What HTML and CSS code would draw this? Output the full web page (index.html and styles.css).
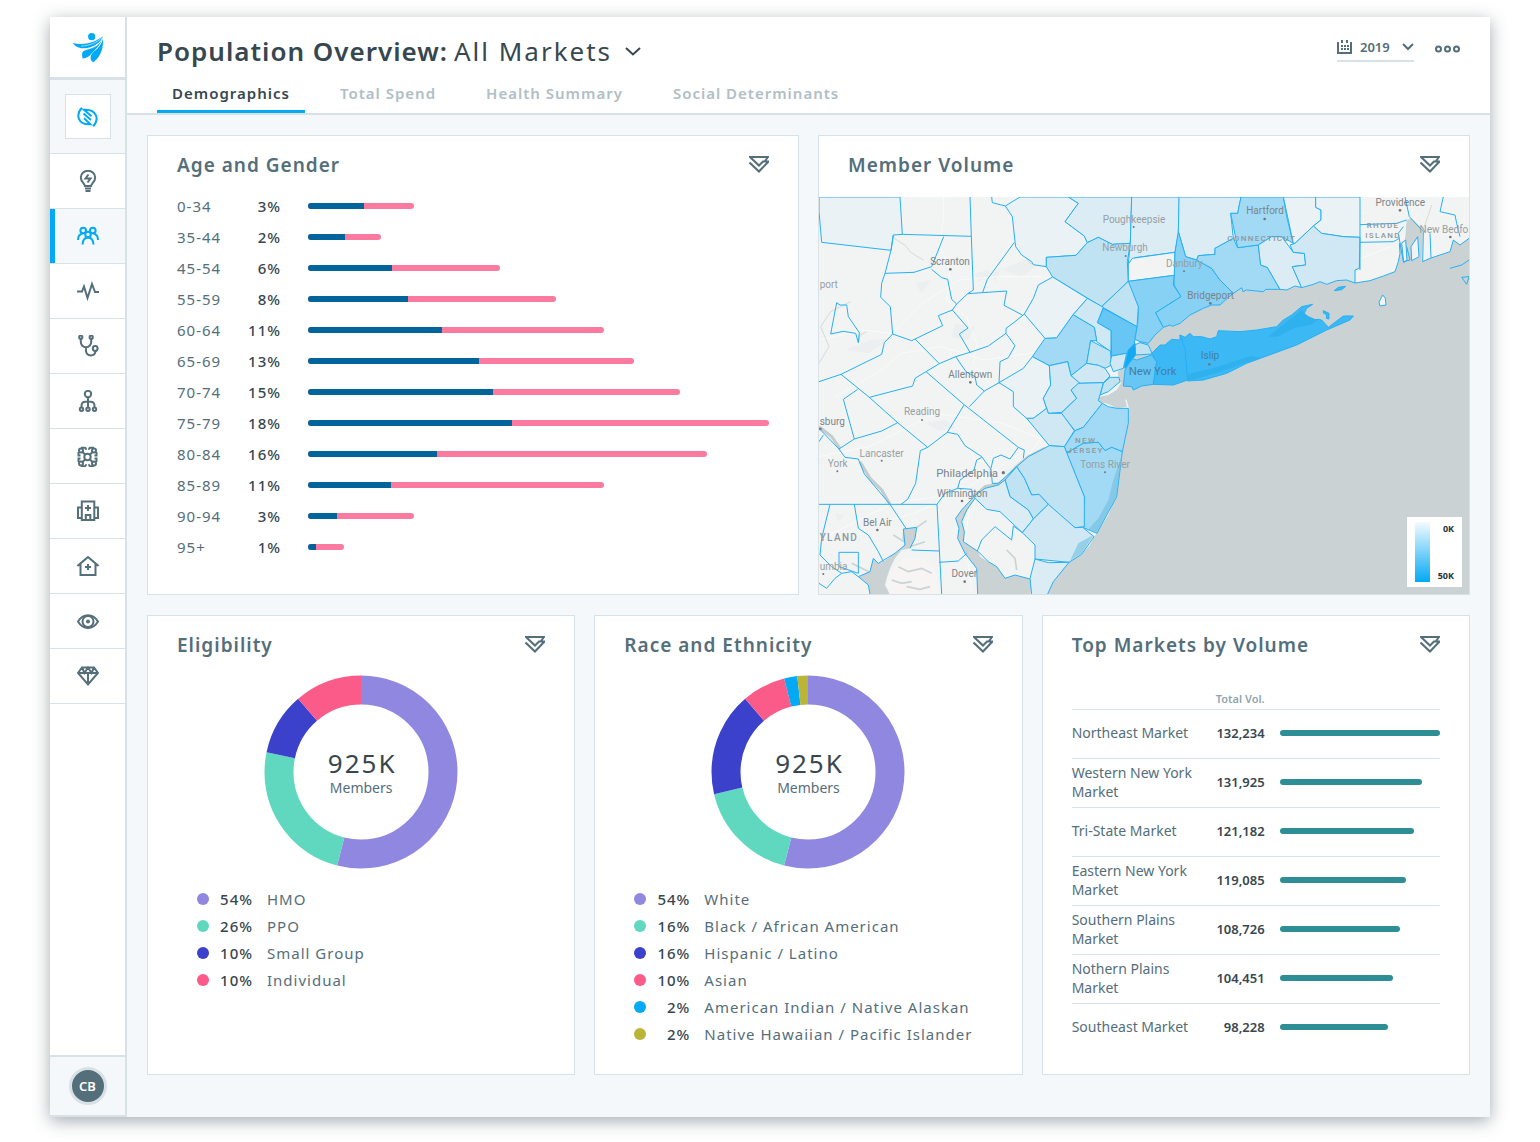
FILE: index.html
```html
<!DOCTYPE html>
<html lang="en">
<head>
  <meta charset="UTF-8">
  <meta name="viewport" content="width=device-width, initial-scale=1.0">
  <title>Population Overview</title>
  <link rel="stylesheet" href="styles.css">
</head>
<body>
  <!-- shared icons -->
  <svg class="sprite" aria-hidden="true">
    <symbol id="i-filter" viewBox="0 0 20 17"><path d="M16 5l3-4H1l9 8.500 4-4h5.500L10 15.500.5 6.500"/></symbol>
    <symbol id="i-chevron" viewBox="0 0 16 9"><path d="M1 1l7 6.500L15 1"/></symbol>
  </svg>

  <div class="app">
    <nav class="sidebar" aria-label="Main">
      <a class="brand" href="#" aria-label="Home">
        <svg width="30" height="30" viewBox="0 0 30 30">
          <circle cx="18.700" cy="3.700" r="3.600"/>
          <path d="M0 10c10 2.300 21 .5 30-7-1 3-2.500 5-4.500 6.800C20 14 14 15.800 8.500 15.200 4.500 14.500 1.500 12.800 0 10z"/>
          <path d="M29.500 5c-1.500 4.500-5 8-10 10-3 1.200-7 1.800-9 3-2 1.500-1.500 4.500-.8 7.500 4-.3 6.500-2 9-5C22 16.500 27.500 12.500 29.500 5z"/>
          <path d="M29.900 6c.8 9.500-2.500 18-9.600 23.300-3-1.500-3.500-4.800-1.700-8C21.500 17 27.500 15 29.900 6z"/>
          <path class="stripe" d="M29.500 4C24 9.500 18 12.300 8 13.200"/>
        </svg>
      </a>
      <div class="org">
        <a class="org-box" href="#" aria-label="Organization">
          <svg class="icon" width="21" height="20" viewBox="0 0 21 20"><path d="M5 .8C-1.500 7.500.5 18 13.500 17.300L7 11.200M16.200 19.300C22.500 12.500 20 2 7 2.800l7.500 6.500M6.500 6.500l7.500 6.500"/></svg>
        </a>
      </div>
      <a class="nav-item" href="#" aria-label="Insights">
        <svg class="icon" width="22" height="22" viewBox="0 0 22 22"><path d="M8 16c-.2-2.500-4.200-4-4.200-8.500a7.200 6.700 0 0 1 14.400 0C18.200 12 14.200 13.500 14 16zM8 18.500h6M8.500 21h5"/><path d="M11.500 4.500L8.500 8.500h5l-3 4" /></svg>
      </a>
      <a class="nav-item active" href="#" aria-label="Population">
        <svg class="icon" width="22" height="22" viewBox="0 0 22 22"><circle cx="6.200" cy="5.500" r="2.800"/><circle cx="15.800" cy="5.500" r="2.800"/><circle cx="11" cy="9.500" r="2.800"/><path d="M1 15c0-3.500 1.800-5.800 4.500-6.500M21 15c0-3.500-1.800-5.800-4.500-6.500M5.500 19.500c.3-4.500 2.500-7 5.500-7s5.200 2.500 5.500 7"/></svg>
      </a>
      <a class="nav-item" href="#" aria-label="Activity">
        <svg class="icon" width="22" height="22" viewBox="0 0 22 22"><path d="M0 11.500h5l2-5 3.500 11.500L15 4l3 8h4"/></svg>
      </a>
      <a class="nav-item" href="#" aria-label="Care">
        <svg class="icon" width="22" height="22" viewBox="0 0 22 22"><circle cx="3.800" cy="2.200" r="1.600"/><circle cx="14.200" cy="2.200" r="1.600"/><circle cx="18.200" cy="13.500" r="2.400"/><path d="M3.800 4v3a5.200 5.200 0 0 0 10.400 0V4M9 12.200v4a4.800 4.800 0 0 0 9.500.2V16"/></svg>
      </a>
      <a class="nav-item" href="#" aria-label="Structure">
        <svg class="icon" width="22" height="22" viewBox="0 0 22 22"><circle cx="11" cy="4" r="3.200"/><circle cx="4.500" cy="19.200" r="1.700"/><circle cx="11" cy="19.200" r="1.700"/><circle cx="17.500" cy="19.200" r="1.700"/><path d="M11 7.200v10.300M4.500 17.500v-1.500c0-2.800 1.500-4.200 4-4.200h5c2.500 0 4 1.400 4 4.200v1.500"/></svg>
      </a>
      <a class="nav-item" href="#" aria-label="Networks">
        <svg class="icon" width="22" height="22" viewBox="0 0 22 22"><circle cx="10.500" cy="12" r="3.200"/><circle cx="4" cy="5.500" r="2"/><circle cx="17" cy="5.500" r="2"/><circle cx="4" cy="18.500" r="2"/><circle cx="17" cy="18.500" r="2"/><path d="M5.500 7l3 3M15.500 7l-3 3M5.500 17l3-3M15.500 17l-3-3M4 2.800h3.500c1 0 1.500 1 1.500 2M17 2.800h-3.500c-1 0-1.500 1-1.500 2M4 21.200h3.500c1 0 1.500-1 1.500-2M17 21.200h-3.500c-1 0-1.500-1-1.500-2M1.500 7v3.500h2M1.500 17v-3.500h2M19.500 7v3.500h-2M19.500 17v-3.500h-2"/></svg>
      </a>
      <a class="nav-item" href="#" aria-label="Hospitals">
        <svg class="icon" width="22" height="22" viewBox="0 0 22 22"><path d="M4.800 1.500h12.500v18.500H4.800zM4.800 7.500H1v10.500h3.800M17.300 7.500H21v10.500h-3.700M8.800 20v-5h4.500v5M11 5v6M8 8h6"/></svg>
      </a>
      <a class="nav-item" href="#" aria-label="Home care">
        <svg class="icon" width="22" height="22" viewBox="0 0 22 22"><path d="M.5 11L11 2l10.500 9M3.500 9v11h15V9M11 9v6M8 12h6"/></svg>
      </a>
      <a class="nav-item" href="#" aria-label="Vision">
        <svg class="icon" width="22" height="22" viewBox="0 0 22 22"><path d="M1 11.500c5-8.500 15-8.500 20 0-5 8.500-15 8.500-20 0z"/><circle cx="11" cy="11.500" r="5.500"/><circle cx="11" cy="11.500" r="1"/></svg>
      </a>
      <a class="nav-item" href="#" aria-label="Value">
        <svg class="icon" width="22" height="22" viewBox="0 0 22 22"><path d="M5 2.500h12l4 5.500-10 11.500L1 8zM1 8h20M11 8v11M5 2.500L7.500 8 11 2.500 14.500 8 17 2.500"/></svg>
      </a>
      <div class="user"><a class="avatar" href="#">CB</a></div>
    </nav>

    <div class="main">
      <header class="header">
        <div class="title-row">
          <h1>
            <label for="market">Population Overview:</label>
            <span class="picker">
              <select id="market"><option>All Markets</option></select>
              <svg class="icon" width="16" height="9"><use href="#i-chevron"/></svg>
            </span>
          </h1>
          <div class="tools">
            <div class="picker year">
              <label for="year" aria-label="Year">
                <svg class="icon" width="15" height="14" viewBox="0 0 15 14"><path d="M1 2v11h13V2M5 0v3M10 0v3"/><path class="dots" d="M4 6h8M4 9h8"/></svg>
              </label>
              <select id="year"><option>2019</option></select>
              <svg class="icon" width="12" height="8" viewBox="0 0 12 8"><path d="M1 1l5 5 5-5"/></svg>
            </div>
            <button class="more" type="button" aria-label="More">
              <svg class="icon" width="25" height="8" viewBox="0 0 25 8"><circle cx="3.500" cy="4" r="2.500"/><circle cx="12.500" cy="4" r="2.500"/><circle cx="21.500" cy="4" r="2.500"/></svg>
            </button>
          </div>
        </div>
        <div class="tabs">
          <a class="tab current" href="#">Demographics</a>
          <a class="tab" href="#">Total Spend</a>
          <a class="tab" href="#">Health Summary</a>
          <a class="tab" href="#">Social Determinants</a>
        </div>
      </header>

      <main class="content">
        <div class="row two">
          <section class="card">
            <div class="card-head">
              <h2>Age and Gender</h2>
              <button type="button" aria-label="Filter"><svg class="icon" width="20" height="17"><use href="#i-filter"/></svg></button>
            </div>
            <table class="ages">
              <tr><th scope="row">0-34</th><td>3%</td><td class="bar-cell"><div class="bar split" style="width:22.900%"><i style="width:53%"></i></div></td></tr>
              <tr><th scope="row">35-44</th><td>2%</td><td class="bar-cell"><div class="bar split" style="width:15.800%"><i style="width:50.500%"></i></div></td></tr>
              <tr><th scope="row">45-54</th><td>6%</td><td class="bar-cell"><div class="bar split" style="width:41.600%"><i style="width:43.800%"></i></div></td></tr>
              <tr><th scope="row">55-59</th><td>8%</td><td class="bar-cell"><div class="bar split" style="width:53.800%"><i style="width:40.300%"></i></div></td></tr>
              <tr><th scope="row">60-64</th><td>11%</td><td class="bar-cell"><div class="bar split" style="width:64.200%"><i style="width:45.400%"></i></div></td></tr>
              <tr><th scope="row">65-69</th><td>13%</td><td class="bar-cell"><div class="bar split" style="width:70.700%"><i style="width:52.400%"></i></div></td></tr>
              <tr><th scope="row">70-74</th><td>15%</td><td class="bar-cell"><div class="bar split" style="width:80.800%"><i style="width:49.600%"></i></div></td></tr>
              <tr><th scope="row">75-79</th><td>18%</td><td class="bar-cell"><div class="bar split" style="width:100%"><i style="width:44.200%"></i></div></td></tr>
              <tr><th scope="row">80-84</th><td>16%</td><td class="bar-cell"><div class="bar split" style="width:86.600%"><i style="width:32.300%"></i></div></td></tr>
              <tr><th scope="row">85-89</th><td>11%</td><td class="bar-cell"><div class="bar split" style="width:64.200%"><i style="width:28%"></i></div></td></tr>
              <tr><th scope="row">90-94</th><td>3%</td><td class="bar-cell"><div class="bar split" style="width:22.900%"><i style="width:27.500%"></i></div></td></tr>
              <tr><th scope="row">95+</th><td>1%</td><td class="bar-cell"><div class="bar split" style="width:7.800%"><i style="width:22%"></i></div></td></tr>
            </table>
          </section>

          <section class="card map-card">
            <div class="card-head">
              <h2>Member Volume</h2>
              <button type="button" aria-label="Filter"><svg class="icon" width="20" height="17"><use href="#i-filter"/></svg></button>
            </div>
            <div class="map">
              <svg class="map-art" viewBox="12 21 1950 1191" preserveAspectRatio="xMidYMid slice">
                <!-- roads and hills -->
                <g class="hills">
                  <path d="M50 90l60-20 40 25-30 10zM90 480l80-30 60-5-70 45zM560 240l90-40 30 20-60 40zM420 400l60 10-20 40-50-10zM300 280l50-10-30 40zM640 640l40-30 20 20zM750 60l40-15 20 20-30 15zM530 250l30-20-20 50zM480 250l40-10 5 15-35 20zM330 700l60-10 30 20-50 12zM60 970l30 5-20 20zM560 850l50-30-20 35zM1010 300l40-20-10 25zM1300 140l60-10-10 15z"/>
                </g>
                <g class="roads">
                  <path d="M385 21v60l-10 90 30 70-10 90 60 50 30 80-10 60 60 70M12 450l130-30 90 10 90-90 110-70 120-10 130 0 150 60M60 620l140-80 60-50 120-20 130 40 200-30 130 10M12 800l150-30 200-100 200 30 150 60M640 800l60-90 90-110 60-80 90-110M12 1050l220-110 200-30 200-130M420 700l60 110 60 10M770 780l-60 130 10 150M1100 60l100 20 130 0 120-40 200 30M1180 330l-20-90 120-60 80-100M1400 250l200-30 150-60 60-90M860 740l30 80-20 130-60 100M470 1200l-20-150 20-140M150 1010l150-40 100-50"/>
                </g>
                <g class="streams">
                  <path d="M133 21l8 50 30 20 20 15-5 20 30 10 15 5 40 25 15 20 40 25M12 520l30-50-25-60 30-45 60-30M155 425l-20 10-3 20M600 160l45 60 48 8M1360 21l15 50-5 60 30 40 35 30 25 50M1540 190l2 80M1850 45l-20 60-15 30"/>
                </g>

                <!-- water -->
                <path class="water" d="M697 1212L715 1170 740 1135 762 1115 800 1093 825 1065 837 1040 846 1030 880 975 905 915 912 845 922 785 940 705 942 655 935 630 930 628 936 650 905 655 880 642 850 635 848 622 880 615 905 600 918 580 910 560 908 545 930 530 945 490 975 455 1000 460 1020 435 1045 412 1065 405 1072 409 1095 400 1125 375 1165 355 1190 345 1215 345 1237 325 1255 310 1280 293 1284 305 1295 300 1320 303 1345 305 1352 298 1375 297 1415 300 1440 288 1465 293 1495 283 1515 275 1535 283 1565 272 1595 270 1620 279 1665 272 1705 258 1740 245 1750 215 1755 190 1753 160 1770 150 1775 90 1790 85 1815 110 1823 130 1820 215 1845 205 1875 195 1905 185 1915 150 1935 165 1962 145 1980 140 1980 1220z"/>
                <path class="water" d="M475 925L440 960 422 985 432 1015 428 1045 450 1090 485 1135 488 1214H646L650 1175 640 1165 600 1155 570 1165 545 1130 520 1115 495 1100 490 1085 445 1055 448 1025 440 995 455 960 480 925z"/>
                <path class="water" d="M165 1214L160 1185 130 1160 165 1145 175 1105 190 1120 205 1115 240 1090 270 1065 262 1045 265 1017 305 1012 300 1045 285 1075 260 1080 240 1105 225 1135 215 1165 210 1185 225 1214z"/>
                <path class="river" d="M475 922L510 890 550 882 575 865 605 830 640 800 690 775M225 943L200 900 165 865 135 815M75 775L50 740 12 710"/>
                <path class="eastern" d="M225 1214l-10-29 10-40 40-40 60 0 30 20 25 87z"/>
                <path class="inlet" d="M250 1130l30 15 40-10 30 15M230 1170l30 10 30-5M275 1190l40 8 30-8M575 1080l25 25 5 35M820 1030l-40 70-60 70M305 1012l30-20M275 1060l-40-25M330 1055l-45 15M170 1150l-60-30"/>

                <!-- counties with members -->
                <g class="county">
                  <path class="v1" d="M12 21H255L262 133 235 135 228 181 20 157 12 65z"/>
                  <path class="v1" d="M615 21L571 48 592 80 600 155 602 170 620 195 650 215 655 224 694 230V202L783 196 817 158 808 138 750 95 790 40 760 21z"/>
                  <path class="v2" d="M760 21L790 40 750 95 808 138 817 158 850 142 892 163 946 160 950 21z"/>
                  <path class="v4" d="M694 202L783 196 817 158 850 142 892 163 946 160 937 215 940 274 860 350 713 261 694 230z"/>
                  <path class="v2" d="M950 21H1093L1090 130 1080 187 960 203 940 220 946 160z"/>
                  <path class="v0" d="M940 222L952 205 1080 187 1078 256 940 274z"/>
                  <path class="v6" d="M940 274L1078 256 1075 285 1098 320 1022 368 1045 412 1020 435 1000 460 975 455 958 447 968 400 970 350 945 300z"/>
                  <path class="v4" d="M940 274L970 350 966 410 860 350z"/>
                  <path class="v7" d="M865 355L966 410 958 460 935 490 890 498 888 422 847 398z"/>
                  <path class="v3" d="M817 325L865 352 847 398 888 422V485L845 455 838 412 774 374z"/>
                  <path class="v5" d="M774 374L838 412 845 452 827 452 815 520 768 557 758 515 703 527 652 500 690 445 725 443z"/>
                  <path class="v1" d="M713 261L817 325 774 374 725 443 690 445 628 372 655 325 670 285z"/>
                  <path class="v4" d="M827 452L886 483 890 525 870 535 850 526 815 520z"/>
                  <path class="v3" d="M815 520L850 526 870 535 885 558 865 578 790 580 768 557z"/>
                  <path class="v3" d="M890 498L935 490 925 535 895 545 885 520z"/>
                  <path class="v4" d="M865 580L885 562 912 562 915 575 880 605 855 615z"/>
                  <path class="v1" d="M652 500L703 527 707 585 685 625 695 655 655 685 635 685 595 650V605L552 578 625 535z"/>
                  <path class="v3" d="M703 527L758 515 768 557 795 580 768 600 785 625 740 667 700 670 685 625 707 585z"/>
                  <path class="v4" d="M790 580L865 578 855 615 850 632 862 640 805 712 780 722 738 670 785 625 768 600z"/>
                  <path class="v5" d="M862 640L880 650 905 655 940 655 940 700 922 785 890 772 870 782 850 757 805 760 770 780 755 787 748 770 780 722 805 712z"/>
                  <path class="v5" d="M755 790L770 780 805 760 850 757 870 782 890 772 922 785 905 920 846 1030 803 1012 808 920z"/>
                  <path class="v3" d="M635 685L655 685 695 655 700 670 740 670 778 722 748 770 703 767z"/>
                  <path class="v4" d="M703 767L748 770 808 920V1010L780 1013 735 985 700 943 672 913 650 915 628 865 605 830 640 800z"/>
                  <path class="v4" d="M605 830L628 865 650 915 672 913 700 943 655 987 640 960 585 920 570 870z"/>
                  <path class="v2" d="M570 870L585 920 640 960 655 987 622 1028 555 965 515 958 475 920 510 895 550 885z"/>
                  <path class="v3" d="M700 943L780 1013 803 1012 837 1040 800 1093 762 1117 660 1107V1065L622 1028 655 987z"/>
                  <path class="v2" d="M660 1107L700 1118 762 1117 715 1175 697 1214H650L645 1165z"/>
                  <path class="v2" d="M1092 21H1278L1268 70 1247 70 1255 145 1200 175V193L1150 197 1145 210 1112 200 1090 125z"/>
                  <path class="v6" d="M1090 125L1112 200 1145 210 1190 235 1215 270 1255 310 1237 325 1215 345 1190 345 1165 355 1125 375 1095 400 1072 409 1065 405 1045 412 1022 368 1098 320 1077 285 1080 187z"/>
                  <path class="v5" d="M1150 197L1200 193V175L1255 145 1268 173 1330 165 1337 225 1357 232 1395 298 1352 298 1345 305 1295 300 1284 305 1280 293 1255 310 1215 270 1190 235 1145 210z"/>
                  <path class="v5" d="M1278 21H1405L1415 80 1435 160 1400 140 1370 140 1330 165 1268 173 1247 70 1268 70z"/>
                  <path class="v2" d="M1330 165L1370 140 1400 140 1435 187 1468 190 1472 225 1432 230 1460 293 1440 288 1415 300 1395 298 1357 232 1337 225z"/>
                  <path class="v1" d="M1405 21H1502V52L1518 60V90L1495 108 1440 160 1435 160z"/>
                  <path class="v1" d="M1502 21H1635V142L1585 140 1520 130 1495 108 1518 90V60L1502 52z"/>
                  <path class="v3" d="M1440 160L1495 108 1520 130 1585 140 1635 142 1633 235 1620 240V279L1595 270 1565 272 1535 283 1515 275 1495 283 1460 293 1432 230 1472 225 1468 190 1435 187 1425 165z"/>
                  <!-- New York City and Long Island -->
                  <path class="v4" d="M962 495L958 465 975 458 1000 465 1012 492z"/>
                  <path class="v7" d="M930 540L950 505 965 510 1010 495 1025 515 1015 583 980 588 955 600 950 590 925 588z"/>
                  <path class="v9" d="M960 460L962 495 930 535 928 528 940 480z"/>
                  <path class="v8" d="M1010 490L1035 465 1050 465 1070 448 1095 450 1095 435 1112 475 1118 570 1075 585 1015 583 1025 515z"/>
                  <path class="v8" d="M1095 435L1110 442 1125 430 1135 440 1160 440 1185 447 1205 440 1210 422 1275 425 1325 420 1385 410 1405 390 1430 375 1460 350 1493 343 1475 355 1468 370 1490 390 1510 388 1520 390 1540 412 1585 378 1615 378 1605 390 1535 420 1445 465 1295 520 1235 550 1165 570 1118 573 1110 475z"/>
                  <path class="v8" d="M1525 362l17 8v17l-8-2 1-10-10-6zM1558 302l12-10 22-3-12 10z"/>
                  <path class="v0" d="M1703 315l8 10 2 20-18 3-3-12zM1760 160l12-10 4 60-10 8zM1788 170l20-30 4 60-22 12z"/>
                </g>
                <path class="lagoon" d="M922 790L905 915 846 1030 820 1018 850 985 880 930 895 870zM835 1035L800 1090 765 1112 790 1060z"/>
                <path class="shade" d="M1360 440l30-25 70-55 12 15 35 15-20 15-50 10-50 25zM1118 573l90-25 130-45-30-5-110 35-80 20z"/>

                <!-- other county lines -->
                <g class="lines">
                  <path d="M262 133L469 139M465 21L469 139 475 300 458 311M235 135L228 181 210 250 297 247 350 230 386 140M210 250L200 280 197 322 226 350 233 432 290 452 383 407 370 377 412 360 425 342 410 328 398 268 380 263 350 238M425 342L458 311 575 303 567 346 622 375M503 307L517 268 598 157M530 21L532 38 571 48M412 360L459 414 433 432 465 487M628 372L600 395 573 415V430L520 468 465 487 422 500 373 521 333 545 300 565 293 588 163 622M300 447L373 521M233 432L208 458 200 493 78 553 12 575M78 553L163 622 248 698 338 772M128 598L85 628 118 747 72 777 12 715M573 430L600 467 580 503 555 515 552 580M552 578L508 603 463 650M422 500L453 545 480 560 485 585 508 603M333 545L445 642 610 772"/>
                  <path d="M65 338L75 345 95 345 100 380 133 428 130 458 122 430 85 424 47 432z"/>
                  <path d="M118 747L200 723 248 698M72 777L90 802 130 807 148 852 225 943 273 1015M12 943H366L380 1212M338 772L316 782 302 880 278 928 258 943M338 772L397 727 447 645M397 727L428 733 450 767 500 800 528 838 532 880 550 880 605 830M500 802L485 810 477 840 435 870 428 895 470 898 475 920M366 943L390 910 428 895M528 835L535 805 558 795 585 807 610 772 628 780 625 805M622 1028L595 1008 590 1050 540 1010 500 1050 487 1083M45 943L20 1045 15 1095 50 1130 80 1150 110 1145 130 1160M118 943L130 1015 160 1035 190 1085 205 1115M72 1087H130V1150L72 1130zM372 1117L430 1113 455 1090M290 1080L372 1083M12 1180L35 1195 60 1165 80 1150M12 755L25 735"/>
                  <path d="M475 922L440 960 422 985 432 1015 428 1045 450 1090 485 1135 488 1212M480 925L455 960 440 995 448 1025 445 1055 490 1085 520 1115 545 1130 570 1165 600 1155 645 1167M165 1212L160 1185 130 1160 165 1145 175 1105 190 1120 240 1090 270 1065 265 1017 305 1012 300 1045 285 1075"/>
                  <path d="M1635 104L1745 100 1775 90M1635 157L1735 155 1753 145M1635 142V240M1620 279L1665 272 1705 258 1740 245 1750 215 1755 190 1753 160M1770 21L1783 80 1825 125 1823 215 1845 205 1905 185 1915 150 1935 165 1962 145M1845 130L1848 203M1885 21L1875 65 1920 75 1925 100 1935 140M1905 235L1940 225 1962 210M1940 262L1962 260 1955 283zM1765 110L1750 130 1765 215 1785 210 1775 170"/>
                </g>

                <g class="labels">
                  <g class="faint">
                    <text x="957" y="98">Poughkeepsie</text>
                    <text x="930" y="184">Newburgh</text>
                    <text x="1108" y="230">Danbury</text>
                    <text x="321" y="676">Reading</text>
                    <text x="200" y="800">Lancaster</text>
                    <text x="68" y="830">York</text>
                    <text x="870" y="833">Toms River</text>
                    <text class="from-left" x="14" y="294">port</text>
                    <text class="to-right" x="1960" y="128">New Bedfo</text>
                    <text class="from-left" x="14" y="1140">umbia</text>
                  </g>
                  <text class="on-blue" x="1185" y="508">Islip</text>
                  <text x="405" y="224">Scranton</text>
                  <text x="466" y="564">Allentown</text>
                  <text x="1350" y="72">Hartford</text>
                  <text x="1756" y="47">Providence</text>
                  <text x="1187" y="326">Bridgeport</text>
                  <text x="442" y="920">Wilmington</text>
                  <text x="187" y="1007">Bel Air</text>
                  <text x="448" y="1162">Dover</text>
                  <text class="from-left" x="14" y="704">sburg</text>
                  <g class="city">
                    <text x="456" y="861">Philadelphia</text>
                    <text class="on-blue" x="1013" y="556">New York</text>
                  </g>
                  <g class="state">
                    <text x="1340" y="153">CONNECTICUT</text>
                    <text x="1704" y="113">RHODE</text>
                    <text x="1704" y="144">ISLAND</text>
                    <text x="812" y="758">NEW</text>
                    <text x="812" y="789">JERSEY</text>
                    <text class="from-left large" x="14" y="1054">YLAND</text>
                  </g>
                </g>
                <g class="towns">
                  <circle cx="406" cy="238" r="4"/><circle cx="466" cy="577" r="4"/><circle cx="956" cy="111" r="3"/><circle cx="932" cy="198" r="3"/>
                  <circle cx="1107" cy="244" r="3"/><circle cx="1186" cy="340" r="4"/><circle cx="1349" cy="87" r="4"/><circle cx="1755" cy="61" r="4"/>
                  <circle cx="1183" cy="523" r="4"/><circle cx="321" cy="690" r="3"/><circle cx="200" cy="812" r="3"/><circle cx="67" cy="844" r="3"/>
                  <circle cx="565" cy="848" r="5"/><circle cx="441" cy="933" r="4"/><circle cx="187" cy="1020" r="4"/><circle cx="449" cy="1175" r="4"/>
                  <circle cx="870" cy="847" r="3"/><circle cx="1906" cy="141" r="4"/><circle cx="25" cy="1152" r="3"/><circle cx="16" cy="717" r="4"/>
                </g>
              </svg>
              <div class="map-legend">
                <span class="scale"></span>
                <div class="scale-labels"><span>0K</span><span>50K</span></div>
              </div>
            </div>
          </section>
        </div>

        <div class="row three">
          <section class="card">
            <div class="card-head">
              <h2>Eligibility</h2>
              <button type="button" aria-label="Filter"><svg class="icon" width="20" height="17"><use href="#i-filter"/></svg></button>
            </div>
            <div class="donut">
              <svg width="194" height="194" viewBox="0 0 194 194">
                <g transform="rotate(-90 97 97)">
                  <circle class="c-purple" cx="97" cy="97" r="82" pathLength="100" stroke-dasharray="54 100"/>
                  <circle class="c-green" cx="97" cy="97" r="82" pathLength="100" stroke-dasharray="24.300 100" stroke-dashoffset="-54"/>
                  <circle class="c-blue" cx="97" cy="97" r="82" pathLength="100" stroke-dasharray="10.400 100" stroke-dashoffset="-78.300"/>
                  <circle class="c-pink" cx="97" cy="97" r="82" pathLength="100" stroke-dasharray="11.300 100" stroke-dashoffset="-88.700"/>
                </g>
              </svg>
              <div class="donut-text"><strong>925K</strong><span>Members</span></div>
            </div>
            <ul class="legend">
              <li><i class="c-purple"></i><b>54%</b><span>HMO</span></li>
              <li><i class="c-green"></i><b>26%</b><span>PPO</span></li>
              <li><i class="c-blue"></i><b>10%</b><span>Small Group</span></li>
              <li><i class="c-pink"></i><b>10%</b><span>Individual</span></li>
            </ul>
          </section>

          <section class="card">
            <div class="card-head">
              <h2>Race and Ethnicity</h2>
              <button type="button" aria-label="Filter"><svg class="icon" width="20" height="17"><use href="#i-filter"/></svg></button>
            </div>
            <div class="donut">
              <svg width="194" height="194" viewBox="0 0 194 194">
                <g transform="rotate(-90 97 97)">
                  <circle class="c-purple" cx="97" cy="97" r="82" pathLength="100" stroke-dasharray="54 100"/>
                  <circle class="c-green" cx="97" cy="97" r="82" pathLength="100" stroke-dasharray="17.300 100" stroke-dashoffset="-54"/>
                  <circle class="c-blue" cx="97" cy="97" r="82" pathLength="100" stroke-dasharray="17.400 100" stroke-dashoffset="-71.300"/>
                  <circle class="c-pink" cx="97" cy="97" r="82" pathLength="100" stroke-dasharray="7.300 100" stroke-dashoffset="-88.700"/>
                  <circle class="c-sky" cx="97" cy="97" r="82" pathLength="100" stroke-dasharray="2.200 100" stroke-dashoffset="-96"/>
                  <circle class="c-olive" cx="97" cy="97" r="82" pathLength="100" stroke-dasharray="1.800 100" stroke-dashoffset="-98.200"/>
                </g>
              </svg>
              <div class="donut-text"><strong>925K</strong><span>Members</span></div>
            </div>
            <ul class="legend wide">
              <li><i class="c-purple"></i><b>54%</b><span>White</span></li>
              <li><i class="c-green"></i><b>16%</b><span>Black / African American</span></li>
              <li><i class="c-blue"></i><b>16%</b><span>Hispanic / Latino</span></li>
              <li><i class="c-pink"></i><b>10%</b><span>Asian</span></li>
              <li><i class="c-sky"></i><b>2%</b><span>American Indian / Native Alaskan</span></li>
              <li><i class="c-olive"></i><b>2%</b><span>Native Hawaiian / Pacific Islander</span></li>
            </ul>
          </section>

          <section class="card">
            <div class="card-head">
              <h2>Top Markets by Volume</h2>
              <button type="button" aria-label="Filter"><svg class="icon" width="20" height="17"><use href="#i-filter"/></svg></button>
            </div>
            <table class="markets">
              <thead>
                <tr><td></td><th scope="col">Total Vol.</th><td></td></tr>
              </thead>
              <tbody>
                <tr><th scope="row">Northeast Market</th><td>132,234</td><td class="bar-cell"><div class="bar" style="width:100%"></div></td></tr>
                <tr><th scope="row">Western New York Market</th><td>131,925</td><td class="bar-cell"><div class="bar" style="width:88.700%"></div></td></tr>
                <tr><th scope="row">Tri-State Market</th><td>121,182</td><td class="bar-cell"><div class="bar" style="width:83.700%"></div></td></tr>
                <tr><th scope="row">Eastern New York Market</th><td>119,085</td><td class="bar-cell"><div class="bar" style="width:78.700%"></div></td></tr>
                <tr><th scope="row">Southern Plains Market</th><td>108,726</td><td class="bar-cell"><div class="bar" style="width:75%"></div></td></tr>
                <tr><th scope="row">Nothern Plains Market</th><td>104,451</td><td class="bar-cell"><div class="bar" style="width:70.600%"></div></td></tr>
                <tr><th scope="row">Southeast Market</th><td>98,228</td><td class="bar-cell"><div class="bar" style="width:67.500%"></div></td></tr>
              </tbody>
            </table>
          </section>
        </div>
      </main>
    </div>
  </div>
</body>
</html>
```
FILE: styles.css
```css
* {
  box-sizing: border-box;
}
body {
  margin: 0;
  padding: 17px 50px 25px;
  background: #fff;
  color: #37474f;
  font-family: "Noto Sans", sans-serif;
  font-size: 15px;
}
h1, h2, ul {
  margin: 0;
  padding: 0;
  font-weight: 600;
}
a {
  color: inherit;
  text-decoration: none;
}
button {
  display: flex;
  padding: 0;
  border: 0;
  background: none;
  color: #546e7a;
  cursor: pointer;
}
table {
  border-collapse: collapse;
}
th, td {
  padding: 0;
}
.sprite {
  display: none;
}
.icon {
  fill: none;
  stroke: currentColor;
  stroke-width: 2;
}

.app {
  display: flex;
  background: #f4f8fb;
  box-shadow: 0 4px 16px rgba(55, 71, 79, 0.45);
}

/* sidebar */
.sidebar {
  display: flex;
  flex-direction: column;
  flex: none;
  width: 77px;
  border-right: 2px solid #d8e1e6;
  background: #fff;
  color: #546e7a;
}
.brand {
  display: flex;
  align-items: center;
  justify-content: center;
  height: 63px;
  padding-top: 2px;
  border-bottom: 3px solid #d8e1e6;
  fill: #03a9f4;
}
.stripe {
  fill: none;
  stroke: #fff;
  stroke-width: 0.6;
}
.org {
  display: flex;
  align-items: center;
  justify-content: center;
  height: 74px;
  border-bottom: 1px solid #d8e1e6;
  background: #f4f8fb;
}
.org-box {
  display: flex;
  align-items: center;
  justify-content: center;
  width: 46px;
  height: 45px;
  border: 1px solid #d8e1e6;
  background: #fff;
  color: #03a9f4;
}
.nav-item {
  display: flex;
  align-items: center;
  justify-content: center;
  height: 55px;
  border-bottom: 1px solid #d8e1e6;
}
.nav-item.active {
  background: #f4f8fb;
  color: #03a9f4;
  box-shadow: inset 5px 0 #03a9f4;
}
.user {
  display: flex;
  align-items: center;
  justify-content: center;
  height: 62px;
  margin-top: auto;
  border-top: 2px solid #d8e1e6;
  border-bottom: 2px solid #d8e1e6;
  background: #f4f8fb;
}
.avatar {
  width: 38px;
  border: 3px solid #d8e1e6;
  border-radius: 50%;
  background: #546e7a;
  color: #fff;
  font-size: 13px;
  font-weight: 600;
  line-height: 32px;
  text-align: center;
}

/* header */
.main {
  flex: 1;
  min-width: 0;
}
.header {
  display: flex;
  flex-direction: column;
  justify-content: space-between;
  height: 98px;
  padding: 16px 30px 0;
  border-bottom: 2px solid #d8e1e6;
  background: #fff;
}
.title-row {
  display: flex;
  justify-content: space-between;
}
h1 {
  display: flex;
  gap: 6px;
  font-size: 26px;
  line-height: 36px;
  letter-spacing: 1px;
}
.picker {
  display: flex;
  align-items: center;
  gap: 12px;
}
.picker select {
  padding: 0;
  border: 0;
  background: none;
  color: inherit;
  font: inherit;
  font-weight: 400;
  letter-spacing: 2px;
  appearance: none;
}
.tools {
  display: flex;
  align-items: flex-start;
  gap: 21px;
  color: #546e7a;
}
.year {
  height: 29px;
  border-bottom: 2px solid #d8e1e6;
  font-size: 13px;
}
.year label {
  display: flex;
  margin-right: -4px;
}
.year select {
  font-weight: 600;
  letter-spacing: 0;
}
.dots {
  stroke-dasharray: 2 1;
}
.more {
  margin-top: 12px;
}
.tabs {
  display: flex;
  gap: 20px;
}
.tab {
  height: 35px;
  padding: 0 15px;
  color: #b0bec5;
  font-weight: 600;
  line-height: 31px;
  letter-spacing: 1px;
}
.tab.current {
  border-bottom: 3px solid #03a9f4;
  color: #37474f;
}

/* cards */
.content {
  display: grid;
  gap: 20px;
  padding: 20px 20px 42px;
}
.row {
  display: grid;
  gap: 19px;
}
.two {
  grid-template-columns: 1fr 1fr;
}
.three {
  grid-template-columns: 1fr 1fr 1fr;
}
.card {
  min-height: 460px;
  padding: 0 29px;
  border: 1px solid #d8e1e6;
  background: #fff;
}
.card-head {
  display: flex;
  align-items: center;
  justify-content: space-between;
  height: 54px;
  padding-top: 3px;
  color: #546e7a;
}
h2 {
  font-size: 19px;
  letter-spacing: 1px;
}
.bar {
  height: 6px;
  border-radius: 3px;
  background: #2e8e95;
}

/* age and gender */
.ages {
  width: 100%;
  letter-spacing: 1px;
}
.ages tr {
  height: 31px;
}
.ages th {
  width: 60px;
  color: #546e7a;
  font-weight: 400;
  text-align: left;
}
.ages td {
  width: 44px;
  font-weight: 500;
  text-align: right;
}
.ages .bar-cell {
  width: auto;
  padding-left: 27px;
}
.split {
  overflow: hidden;
  background: #fb7a9f;
}
.split i {
  display: block;
  height: 100%;
  background: #01659b;
}

/* member volume map */
.map-card {
  display: flex;
  flex-direction: column;
  padding: 0;
}
.map-card .card-head {
  height: 61px;
  padding: 0 29px 4px;
}
.map {
  position: relative;
  height: 397px;
  background: #f2f4f4;
}
.map-art {
  display: block;
  width: 100%;
  height: 100%;
}
.hills {
  fill: #ecefef;
}
.roads, .streams, .river, .inlet, .lines {
  fill: none;
}
.roads {
  stroke: #f9fafa;
  stroke-width: 3;
}
.streams {
  stroke: #d3dadb;
  stroke-width: 3;
}
.water {
  fill: #cad2d3;
}
.river {
  stroke: #c4cccd;
  stroke-width: 9;
}
.eastern {
  fill: #f6f5f4;
}
.inlet {
  stroke: #cad2d3;
  stroke-width: 5;
}
.lines, .county {
  stroke: #25b0f5;
  stroke-width: 3;
  stroke-linejoin: round;
}
.v0 { fill: #f2f4f4; }
.v1 { fill: #ebf2f5; }
.v2 { fill: #dcecf4; }
.v3 { fill: #cfe8f4; }
.v4 { fill: #c0e3f4; }
.v5 { fill: #a2daf5; }
.v6 { fill: #87d1f5; }
.v7 { fill: #68c6f5; }
.v8 { fill: #3cb9f5; }
.v9 { fill: #14a9f4; }
.lagoon {
  fill: #6fbfe0;
  opacity: 0.6;
}
.shade {
  fill: #2fb1ee;
}
.labels {
  fill: #7b8589;
  font-family: Roboto, sans-serif;
  font-size: 30px;
  text-anchor: middle;
}
.faint {
  fill: #979fa3;
}
.on-blue {
  fill: #3f7fa3;
}
.from-left {
  text-anchor: start;
}
.to-right {
  text-anchor: end;
}
.city {
  font-size: 34px;
}
.state {
  fill: #8d989c;
  font-size: 24px;
  font-weight: 500;
  letter-spacing: 4px;
}
.large {
  font-size: 30px;
}
.towns {
  fill: #6f797d;
}
.map-legend {
  position: absolute;
  right: 7px;
  bottom: 7px;
  display: flex;
  justify-content: space-between;
  width: 55px;
  height: 70px;
  padding: 5px 8px;
  background: #fff;
  color: #263238;
  font-size: 9px;
  font-weight: 700;
}
.scale {
  width: 15px;
  background: linear-gradient(#f4fbff, #03a9f4);
}
.scale-labels {
  display: flex;
  flex-direction: column;
  justify-content: space-between;
  text-align: right;
}

/* donuts */
.donut {
  position: relative;
  width: 194px;
  height: 194px;
  margin: 5px auto 16px;
}
.donut circle {
  fill: none;
  stroke-width: 29;
}
.donut-text {
  position: absolute;
  inset: 0;
  display: flex;
  flex-direction: column;
  align-items: center;
  justify-content: center;
}
.donut-text strong {
  padding-left: 2px;
  font-size: 26px;
  font-weight: 400;
  line-height: 30px;
  letter-spacing: 2px;
}
.donut-text span {
  color: #546e7a;
  font-size: 14px;
}
.c-purple { stroke: #9087e0; background: #9087e0; }
.c-green { stroke: #60d8c0; background: #60d8c0; }
.c-blue { stroke: #3b41cb; background: #3b41cb; }
.c-pink { stroke: #fb5b88; background: #fb5b88; }
.c-sky { stroke: #03a9f4; background: #03a9f4; }
.c-olive { stroke: #bab537; background: #bab537; }
.legend {
  padding-left: 20px;
  list-style: none;
  letter-spacing: 1px;
}
.legend.wide {
  padding-left: 10px;
}
.legend li {
  display: flex;
  align-items: center;
  height: 27px;
}
.legend i {
  width: 12px;
  height: 12px;
  border-radius: 50%;
}
.legend b {
  width: 44px;
  margin-right: 14px;
  font-weight: 500;
  text-align: right;
}
.legend span {
  color: #546e7a;
  font-weight: 400;
}

/* top markets */
.markets {
  width: 100%;
  margin-top: 19px;
}
.markets thead tr {
  height: 20px;
}
.markets thead th {
  color: #90a4ae;
  font-size: 11px;
  font-weight: 600;
  text-align: right;
  white-space: nowrap;
}
.markets tbody tr {
  height: 49px;
  border-top: 1px solid #d8e1e6;
}
.markets tbody th,
.markets tbody td {
  padding-bottom: 2px;
}
.markets tbody th {
  width: 130px;
  color: #546e7a;
  font-size: 14px;
  font-weight: 400;
  line-height: 19px;
  text-align: left;
}
.markets tbody td {
  width: 63px;
  font-size: 13px;
  font-weight: 600;
  text-align: right;
}
.markets tbody .bar-cell {
  width: auto;
  padding-left: 15px;
}
```
